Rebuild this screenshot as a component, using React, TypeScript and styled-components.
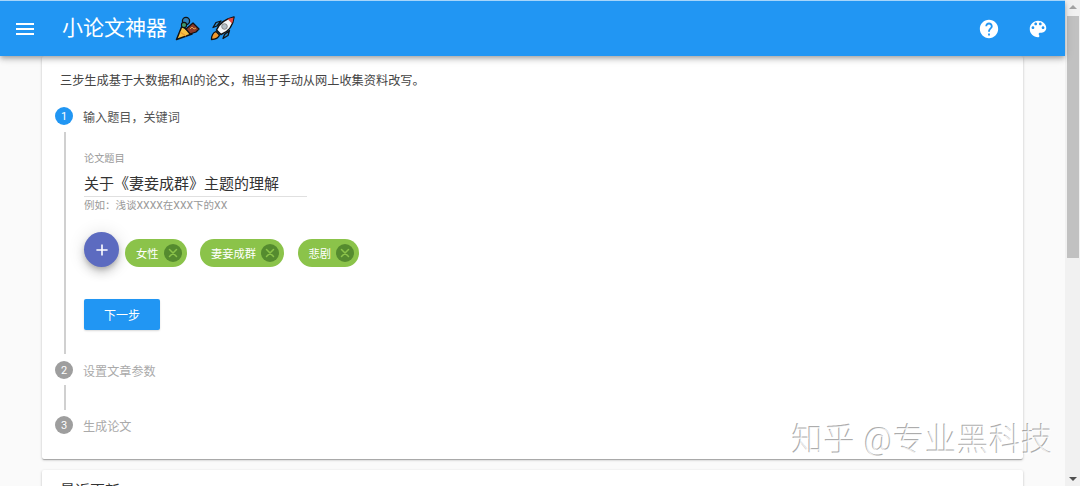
import React from 'react';
import styled, { createGlobalStyle } from 'styled-components';

const GlobalStyle = createGlobalStyle`
html, body {
    margin: 0;
    padding: 0;
    height: 486px;
    overflow: hidden;
    background: #fafafa;
    font-family: Roboto, "Noto Sans CJK SC", sans-serif;
}
`;

const Shell = styled.div`
    position: relative;
    display: flex;
    width: 1080px;
    height: 486px;
    overflow: hidden;
`;

const Page = styled.div`
    flex: 1;
    min-width: 0;
    display: flex;
    flex-direction: column;
`;

const AppBar = styled.header`
    position: relative;
    z-index: 2;
    flex: none;
    height: 55px;
    border-top: 1px solid #a6d5fa;
    display: flex;
    align-items: center;
    background: #2196f3;
    color: #fff;
    box-shadow: 0 2px 4px -1px rgba(0, 0, 0, 0.2), 0 4px 5px 0 rgba(0, 0, 0, 0.14), 0 1px 10px 0 rgba(0, 0, 0, 0.12);
`;

const BarButton = styled.span<{ $left?: number; $right?: number }>`
    display: flex;
    margin-left: ${p => p.$left ?? 0}px;
    margin-right: ${p => p.$right ?? 0}px;
`;

const Title = styled.h1`
    margin: 0 0 0 25px;
    font-size: 21px;
    font-weight: 400;
    line-height: 1;
    display: flex;
    align-items: center;
`;

const Emojis = styled.span`
    display: flex;
    gap: 10px;
    margin-left: 8px;
`;

const Spacer = styled.div`
    flex: 1;
`;

const Content = styled.main`
    flex: 1;
    padding: 0 42px;
`;

const Paper = styled.section`
    background: #fff;
    border-radius: 2px;
    box-shadow: 0 1px 3px 0 rgba(0, 0, 0, 0.2), 0 1px 1px 0 rgba(0, 0, 0, 0.14), 0 2px 1px -1px rgba(0, 0, 0, 0.12);
`;

const MainPaper = styled(Paper)`
    height: 403px;
    box-sizing: border-box;
    padding: 15px 13px 0;
`;

const NextPaper = styled(Paper)`
    margin-top: 11px;
    height: 60px;
    padding: 9px 18px;
    font-size: 15px;
    color: #333;
`;

const Intro = styled.p`
    margin: 0 0 16px 5px;
    height: 20px;
    font-size: 12.2px;
    line-height: 20px;
    color: #444;
`;

const StepHead = styled.div`
    display: flex;
    align-items: center;
    height: 18px;
    gap: 10px;
`;

const StepIcon = styled.span<{ $active?: boolean }>`
    width: 18px;
    height: 18px;
    flex: none;
    border-radius: 50%;
    display: flex;
    align-items: center;
    justify-content: center;
    font-size: 11px;
    color: #fff;
    background: ${p => (p.$active ? '#2196f3' : '#9e9e9e')};
`;

const StepLabel = styled.span<{ $active?: boolean }>`
    font-size: 12.1px;
    color: ${p => (p.$active ? '#555' : '#aaa')};
`;

const StepBody = styled.div<{ $height: number; $top: number; $bottom: number }>`
    display: flow-root;
    height: ${p => p.$height}px;
    margin: ${p => p.$top}px 0 ${p => p.$bottom}px 9px;
    padding-left: 18px;
    border-left: 2px solid #d0d0d0;
`;

const FieldLabel = styled.label`
    display: block;
    margin-top: 20px;
    font-size: 10.2px;
    line-height: 14px;
    color: #999;
`;

const Field = styled.div`
    width: 223px;
    margin-top: 6px;
    height: 24px;
    border-bottom: 1px solid #e0e0e0;
    font-size: 15px;
    line-height: 24px;
    color: #333;
`;

const Helper = styled.div`
    margin-top: 1px;
    font-size: 10.5px;
    line-height: 16px;
    color: #999;
`;

const TagRow = styled.div`
    display: flex;
    align-items: flex-end;
    margin-top: 18px;
`;

const Fab = styled.span`
    width: 35px;
    height: 35px;
    border-radius: 50%;
    flex: none;
    display: flex;
    align-items: center;
    justify-content: center;
    background: #5c6bc0;
    box-shadow: 0 3px 5px -1px rgba(0, 0, 0, 0.2), 0 6px 10px 0 rgba(0, 0, 0, 0.14), 0 1px 18px 0 rgba(0, 0, 0, 0.12);
    margin-right: 6px;
`;

const Chip = styled.span`
    height: 28px;
    margin-right: 13.5px;
    padding: 0 5px 0 11px;
    display: flex;
    align-items: center;
    gap: 5px;
    border-radius: 14px;
    background: #8bc34a;
    color: #fff;
    font-size: 11.25px;
`;

const ChipClose = styled.span`
    width: 18px;
    height: 18px;
    border-radius: 50%;
    display: flex;
    align-items: center;
    justify-content: center;
    background: #558b2f;
`;

const NextButton = styled.button`
    display: block;
    margin-top: 32px;
    width: 76px;
    height: 31px;
    border: 0;
    border-radius: 2px;
    background: #2196f3;
    color: #fff;
    font-family: inherit;
    font-size: 12px;
    box-shadow: 0 1px 2px rgba(0, 0, 0, 0.15);
`;

const Scrollbar = styled.aside`
    flex: none;
    width: 15px;
    display: flex;
    flex-direction: column;
    background: #f1f1f1;
`;

const ScrollArrow = styled.span<{ $down?: boolean }>`
    height: 14px;
    flex: none;
    display: flex;
    align-items: center;
    justify-content: center;
    color: ${p => (p.$down ? '#505050' : '#a3a3a3')};
    &::before {
        content: '';
        border-left: 4px solid transparent;
        border-right: 4px solid transparent;
        ${p => (p.$down ? 'border-top: 4px solid currentColor;' : 'border-bottom: 4px solid currentColor;')}
    }
`;

const ScrollThumb = styled.span`
    width: 12px;
    height: 242px;
    margin: 2px 0 0 2px;
    background: #c1c1c1;
`;

const ScrollRest = styled.span`
    flex: 1;
`;

const Watermark = styled.div`
    position: absolute;
    left: 792px;
    top: 421px;
    font-size: 31.5px;
    line-height: 40px;
    font-weight: 300;
    letter-spacing: 0.5px;
    white-space: nowrap;
    color: rgba(255, 255, 255, 0.75);
    text-shadow: -1px -1px 0 rgba(90, 90, 90, 0.5);
    z-index: 3;
`;

const MenuIcon = () => (
    <svg width="24" height="24" viewBox="0 0 24 24" fill="#fff">
        <path d="M3 18h18v-2H3v2zm0-5h18v-2H3v2zm0-7v2h18V6H3z" />
    </svg>
);

const HelpIcon = () => (
    <svg width="22" height="22" viewBox="0 0 24 24" fill="#fff">
        <path d="M12 2C6.48 2 2 6.48 2 12s4.48 10 10 10 10-4.48 10-10S17.52 2 12 2zm1 17h-2v-2h2v2zm2.07-7.75l-.9.92C13.45 12.9 13 13.5 13 15h-2v-.5c0-1.1.45-2.1 1.17-2.83l1.24-1.26c.37-.36.59-.86.59-1.41 0-1.1-.9-2-2-2s-2 .9-2 2H8c0-2.21 1.79-4 4-4s4 1.79 4 4c0 .88-.36 1.68-.93 2.25z" />
    </svg>
);

const PaletteIcon = () => (
    <svg width="22" height="22" viewBox="0 0 24 24" fill="#fff">
        <path d="M12 3c-4.97 0-9 4.03-9 9s4.03 9 9 9c.83 0 1.5-.67 1.5-1.5 0-.39-.15-.74-.39-1.01-.23-.26-.38-.61-.38-.99 0-.83.67-1.5 1.5-1.5H16c2.76 0 5-2.24 5-5 0-4.42-4.03-8-9-8zm-5.5 9c-.83 0-1.5-.67-1.5-1.5S5.67 9 6.5 9 8 9.67 8 10.5 7.33 12 6.5 12zm3-4C8.67 8 8 7.33 8 6.5S8.67 5 9.5 5s1.5.67 1.5 1.5S10.33 8 9.5 8zm5 0c-.83 0-1.5-.67-1.5-1.5S13.67 5 14.5 5s1.5.67 1.5 1.5S15.33 8 14.5 8zm3 4c-.83 0-1.5-.67-1.5-1.5S16.67 9 17.5 9s1.5.67 1.5 1.5-.67 1.5-1.5 1.5z" />
    </svg>
);

const PartyEmoji = () => (
    <svg width="25" height="25" viewBox="0 0 25 25">
        <path d="M1.5 23.5L7 10l10 8z" fill="#f6c042" stroke="#111" strokeWidth="1.5" strokeLinejoin="round" />
        <path d="M5 16l6 4" stroke="#e8962e" strokeWidth="1.2" />
        <circle cx="11" cy="5" r="3.6" fill="#2f7fb8" stroke="#111" strokeWidth="1.3" />
        <circle cx="9" cy="9" r="2.6" fill="#3e9b6e" stroke="#111" strokeWidth="1.1" />
        <path d="M11 13l7-6 6 6-3 3-6 2z" fill="#8a3a2a" stroke="#111" strokeWidth="1.3" strokeLinejoin="round" />
        <path d="M15 13l2-2 2 2 2-1" stroke="#e0a050" strokeWidth="1" fill="none" />
    </svg>
);

const RocketEmoji = () => (
    <svg width="25" height="25" viewBox="0 0 25 25">
        <path d="M1.5 23.5c0-4 2-7 4.5-8l3.5 3.500c-1 2.500-4 4.500-8 4.500z" fill="#f29a2e" stroke="#111" strokeWidth="1.3" strokeLinejoin="round" />
        <path d="M7 10l-4 1.500 3-5 5-1.500zM14.500 18.500l-1.500 4 5-3 1.500-5z" fill="#2e8bc9" stroke="#111" strokeWidth="1.3" strokeLinejoin="round" />
        <path d="M6.500 14C9 8 15 3 24 1c-1 9-6 15-13 17.500z" fill="#f4f6f8" stroke="#111" strokeWidth="1.5" strokeLinejoin="round" />
        <path d="M17.500 3l6-1.500c-.3 2.500-.8 4-1.500 6z" fill="#e5483f" />
        <circle cx="14.5" cy="10.5" r="2.8" fill="#b5c0c8" stroke="#777" strokeWidth="0.8" />
    </svg>
);

const PlusIcon = () => (
    <svg width="16" height="16" viewBox="0 0 24 24" fill="#fff">
        <path d="M19 13h-6v6h-2v-6H5v-2h6V5h2v6h6v2z" transform="translate(-2.4 -2.4) scale(1.2)" />
    </svg>
);

const CrossIcon = () => (
    <svg width="10" height="10" viewBox="0 0 10 10" stroke="#8bc34a" strokeWidth="1.5" strokeLinecap="round">
        <path d="M1.5 1.5l7 7M8.5 1.5l-7 7" />
    </svg>
);

const tags = ['女性', '妻妾成群', '悲剧'];

const App = () => {
    return (
        <Shell>
            <GlobalStyle />
            <Page>
                <AppBar>
                    <BarButton $left={13}><MenuIcon /></BarButton>
                    <Title>
                        小论文神器
                        <Emojis>
                            <PartyEmoji />
                            <RocketEmoji />
                        </Emojis>
                    </Title>
                    <Spacer />
                    <BarButton $right={27}><HelpIcon /></BarButton>
                    <BarButton $right={16}><PaletteIcon /></BarButton>
                </AppBar>
                <Content>
                    <MainPaper>
                        <Intro>三步生成基于大数据和AI的论文，相当于手动从网上收集资料改写。</Intro>
                        <StepHead>
                            <StepIcon $active>1</StepIcon>
                            <StepLabel $active>输入题目，关键词</StepLabel>
                        </StepHead>
                        <StepBody $height={222} $top={7} $bottom={7}>
                            <FieldLabel>论文题目</FieldLabel>
                            <Field>关于《妻妾成群》主题的理解</Field>
                            <Helper>例如：浅谈XXXX在XXX下的XX</Helper>
                            <TagRow>
                                <Fab><PlusIcon /></Fab>
                                {tags.map(tag => (
                                    <Chip key={tag}>
                                        {tag}
                                        <ChipClose><CrossIcon /></ChipClose>
                                    </Chip>
                                ))}
                            </TagRow>
                            <NextButton>下一步</NextButton>
                        </StepBody>
                        <StepHead>
                            <StepIcon>2</StepIcon>
                            <StepLabel>设置文章参数</StepLabel>
                        </StepHead>
                        <StepBody $height={25} $top={6} $bottom={6} />
                        <StepHead>
                            <StepIcon>3</StepIcon>
                            <StepLabel>生成论文</StepLabel>
                        </StepHead>
                    </MainPaper>
                    <NextPaper>最近更新</NextPaper>
                </Content>
            </Page>
            <Scrollbar>
                <ScrollArrow />
                <ScrollThumb />
                <ScrollRest />
                <ScrollArrow $down />
            </Scrollbar>
            <Watermark>知乎 @专业黑科技</Watermark>
        </Shell>
    );
};

export default App;
